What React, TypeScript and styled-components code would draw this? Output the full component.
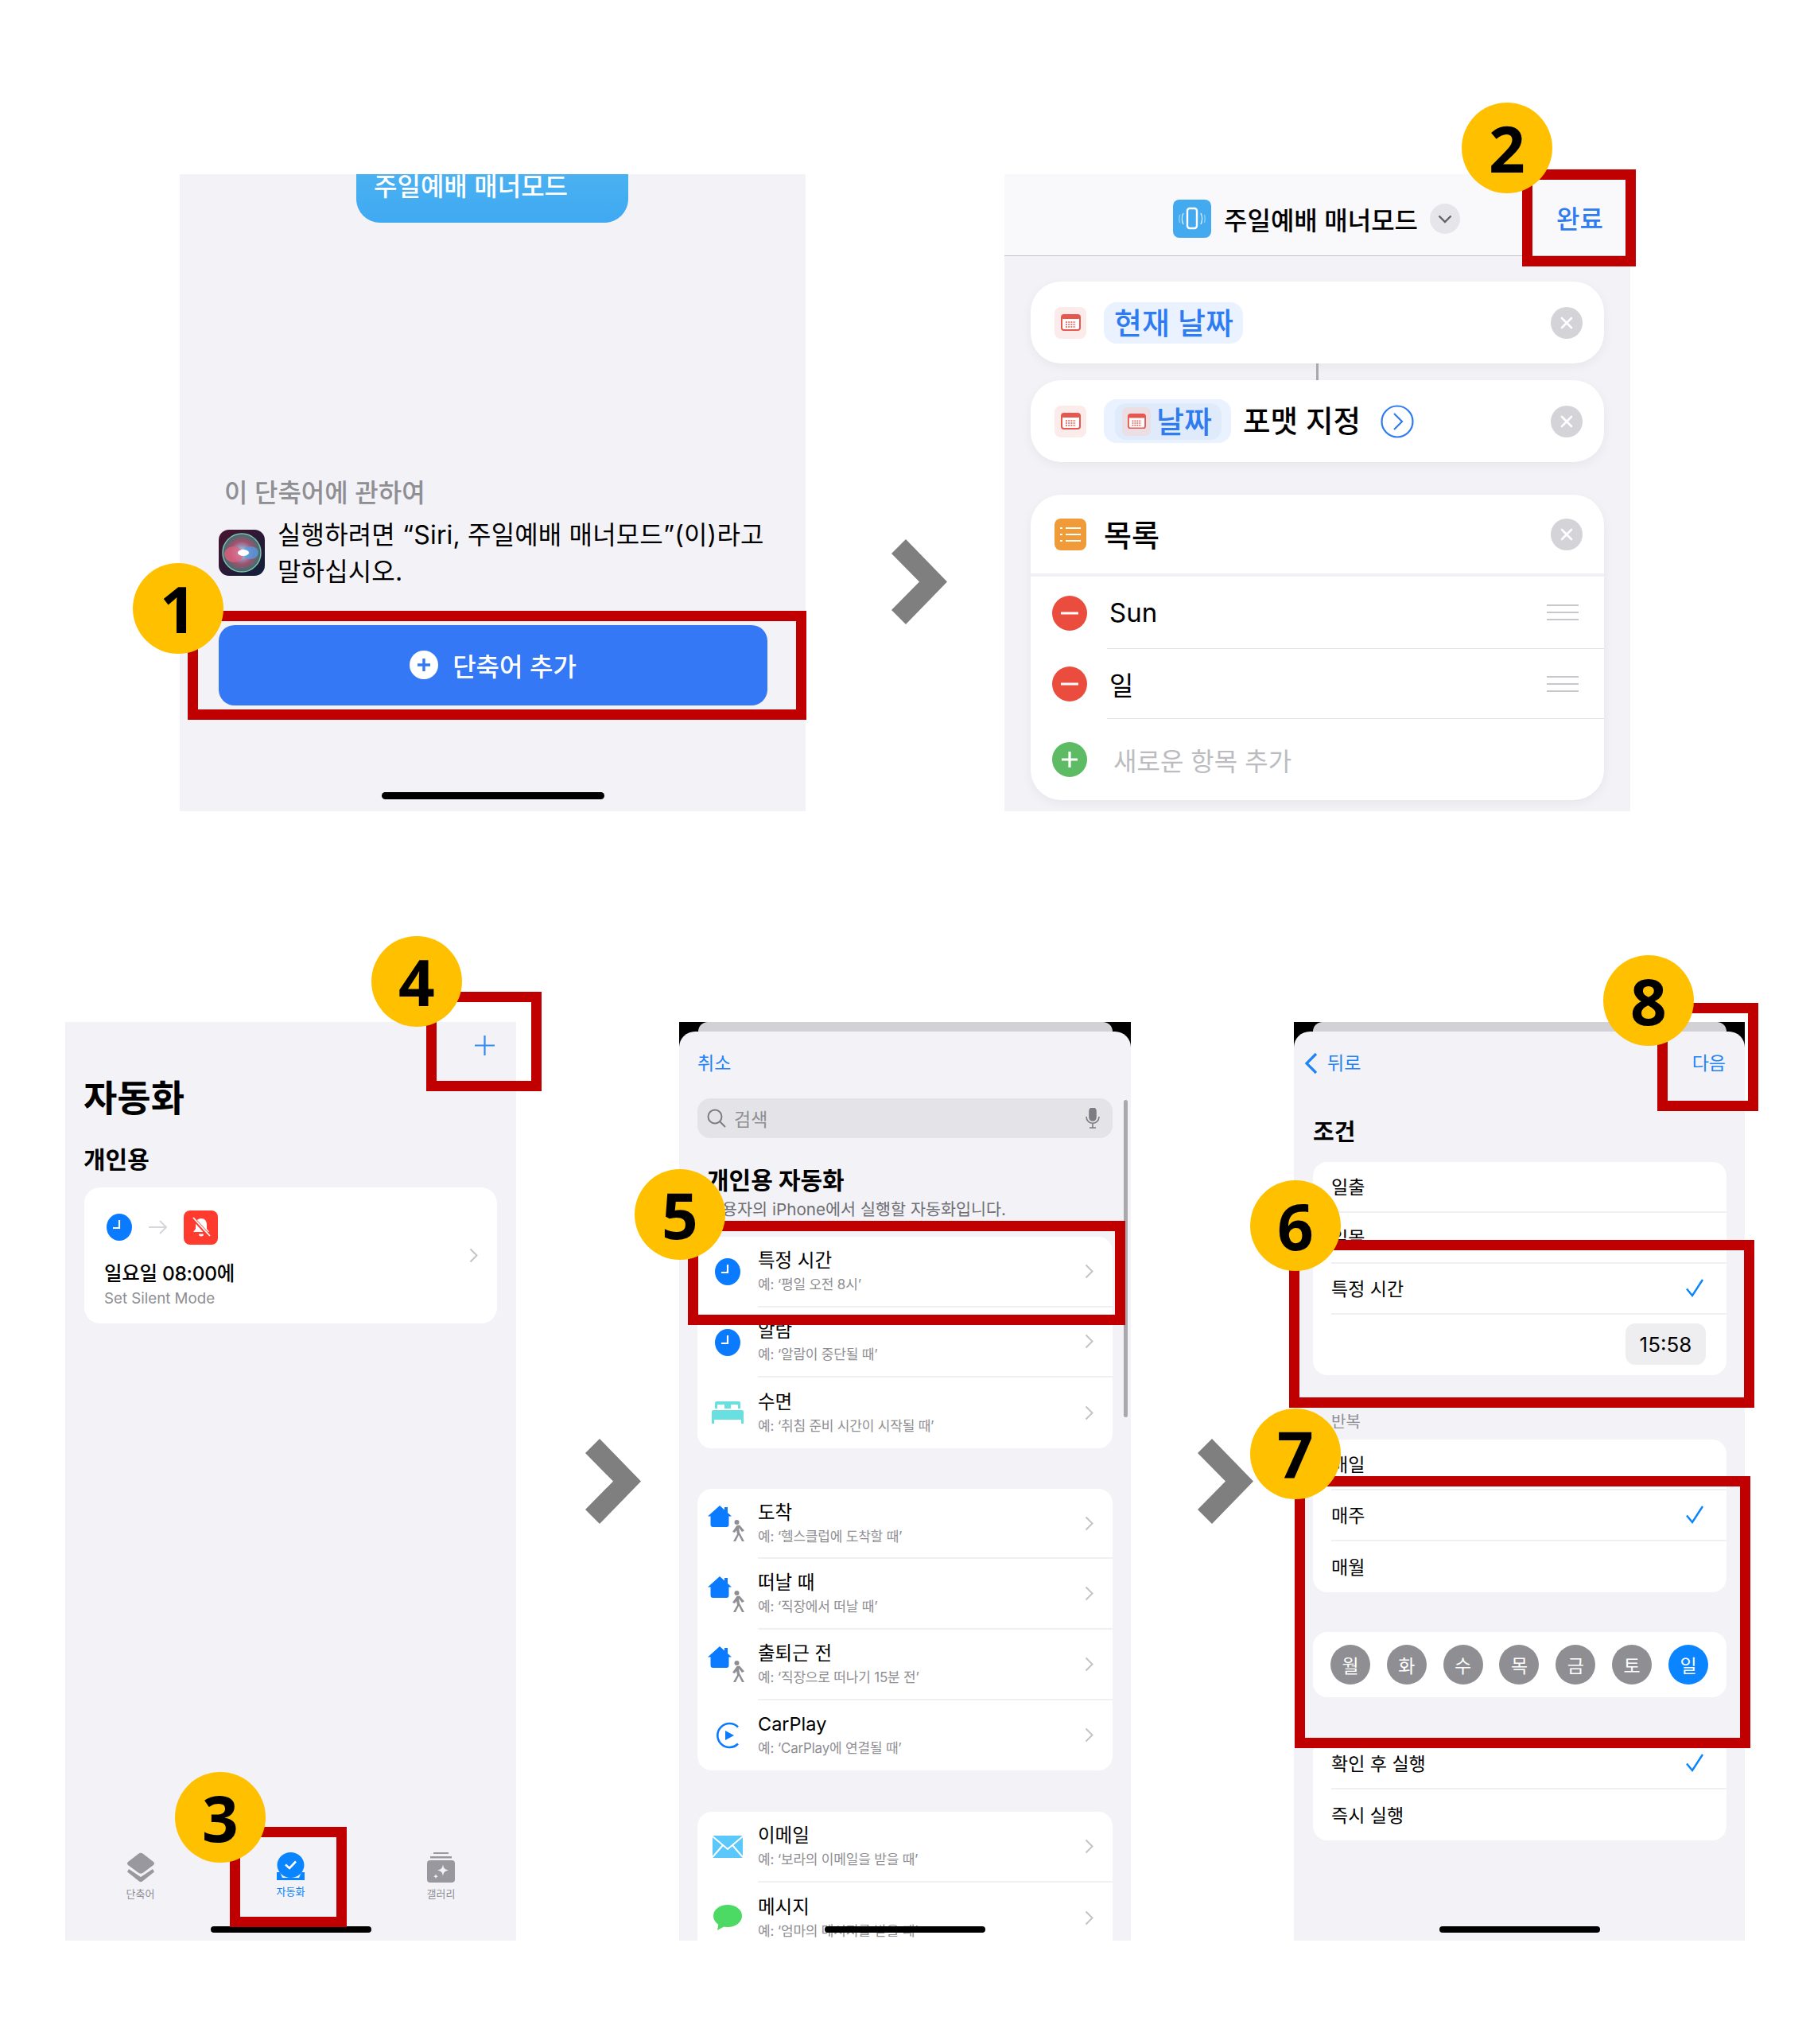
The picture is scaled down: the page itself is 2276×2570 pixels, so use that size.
import styled, { createGlobalStyle } from 'styled-components'

const GlobalStyle = createGlobalStyle`
  html, body {
    margin: 0;
    padding: 0;
    background: #fff;
  }
  * {
    box-sizing: border-box;
  }
  body {
    font-family: Inter, 'Noto Sans CJK KR', sans-serif;
    color: #000;
  }
`

// page layout
const Page = styled.div`
  width: 2276px;
  height: 2570px;
  padding-top: 219px;
  overflow: hidden;
`
const StepRow = styled.div<{ $left: number; $height: number; $mb?: number }>`
  display: flex;
  align-items: flex-start;
  padding-left: ${({ $left }) => $left}px;
  height: ${({ $height }) => $height}px;
  margin-bottom: ${({ $mb }) => $mb ?? 0}px;
`
const Phone = styled.div<{ $w: number; $h: number }>`
  position: relative;
  flex: none;
  width: ${({ $w }) => $w}px;
  height: ${({ $h }) => $h}px;
`
const Screen = styled.div<{ $dark?: boolean }>`
  position: relative;
  display: flex;
  flex-direction: column;
  width: 100%;
  height: 100%;
  overflow: hidden;
  background: ${({ $dark }) => ($dark ? '#000' : '#f2f2f7')};
`
const NextArrow = styled.svg<{ $ml: number; $mr: number; $mt: number }>`
  flex: none;
  width: 70px;
  height: 107px;
  margin: ${({ $mt }) => $mt}px ${({ $mr }) => $mr}px 0 ${({ $ml }) => $ml}px;
  fill: #7f7f7f;
`

// annotations on top of the screenshots
const RedBox = styled.div<{ $x: number; $y: number; $w: number; $h: number }>`
  position: absolute;
  left: ${({ $x }) => $x}px;
  top: ${({ $y }) => $y}px;
  width: ${({ $w }) => $w}px;
  height: ${({ $h }) => $h}px;
  border: 13px solid #c00000;
`
const Badge = styled.div<{ $x: number; $y: number }>`
  position: absolute;
  left: ${({ $x }) => $x}px;
  top: ${({ $y }) => $y}px;
  width: 114px;
  height: 114px;
  padding-bottom: 1px;
  border-radius: 50%;
  background: #ffc000;
  display: flex;
  align-items: center;
  justify-content: center;
  font-family: 'Noto Sans', sans-serif;
  font-size: 80px;
  font-weight: 700;
  line-height: 1;
  color: #000;
`
const HomeBar = styled.div<{ $w: number; $h: number; $bottom: number }>`
  position: absolute;
  left: 50%;
  bottom: ${({ $bottom }) => $bottom}px;
  width: ${({ $w }) => $w}px;
  height: ${({ $h }) => $h}px;
  margin-left: ${({ $w }) => -$w / 2}px;
  border-radius: 5px;
  background: #000;
`

// step 1
const ShortcutTile = styled.div`
  flex: none;
  width: 342px;
  height: 61px;
  margin-left: 222px;
  padding-left: 22px;
  border-radius: 0 0 30px 30px;
  background: linear-gradient(#4ab1f1, #3fa9f2);
  color: #fff;
  font-size: 32px;
  font-weight: 500;
  line-height: 38px;
  margin-bottom: 320px;
  span {
    display: block;
    margin-top: -3px;
  }
`
const AboutTitle = styled.div`
  margin-left: 56px;
  font-size: 32px;
  font-weight: 500;
  line-height: 40px;
  color: #8e8e93;
  margin-bottom: 10px;
`
const SiriRow = styled.div`
  display: flex;
  align-items: flex-start;
  gap: 16px;
  margin-left: 49px;
  margin-bottom: 44px;
  svg {
    flex: none;
    margin-top: 16px;
  }
`
const SiriText = styled.div`
  width: 660px;
  font-size: 32px;
  line-height: 46px;
  letter-spacing: 0.15px;
`
const AddButton = styled.div`
  display: flex;
  align-items: center;
  justify-content: center;
  gap: 18px;
  width: 690px;
  height: 101px;
  margin-left: 49px;
  padding-bottom: 2px;
  border-radius: 20px;
  background: #3478f6;
  color: #fff;
  font-size: 32px;
  font-weight: 500;
`

// step 2
const EditorHeader = styled.div`
  flex: none;
  display: flex;
  align-items: center;
  height: 103px;
  padding: 10px 34px 0 212px;
  background: #f9f9fb;
  border-bottom: 1px solid #c6c6c8;
`
const EditorTitle = styled.div`
  margin-left: 16px;
  font-size: 32px;
  font-weight: 500;
  white-space: nowrap;
`
const TitleChevron = styled.div`
  display: flex;
  align-items: center;
  justify-content: center;
  width: 38px;
  height: 38px;
  margin-left: 15px;
  border-radius: 50%;
  background: #e5e5ea;
`
const DoneLabel = styled.div`
  margin-left: auto;
  margin-top: -5px;
  font-size: 32px;
  font-weight: 500;
  color: #2f7bf0;
`
const EditorBody = styled.div`
  display: flex;
  flex-direction: column;
  padding: 32px 33px 0;
`
const ActionCard = styled.div`
  flex: none;
  display: flex;
  align-items: center;
  height: 103px;
  padding: 0 27px 0 30px;
  border-radius: 38px;
  background: #fff;
  box-shadow: 0 4px 14px rgba(0, 0, 0, 0.05);
`
const Connector = styled.div`
  flex: none;
  align-self: center;
  width: 3px;
  height: 21px;
  background: #a8a8ad;
`
const ActionIcon = styled.div<{ $bg: string }>`
  flex: none;
  display: flex;
  align-items: center;
  justify-content: center;
  width: 40px;
  height: 40px;
  border-radius: 8px;
  background: ${({ $bg }) => $bg};
`
const VarChip = styled.div`
  display: flex;
  align-items: center;
  margin-left: 22px;
  padding: 0 12px 5px 13px;
  height: 52px;
  border-radius: 16px;
  background: #e9f2fe;
  color: #2f7bf0;
  font-size: 38px;
  font-weight: 500;
  white-space: nowrap;
`
const OuterChip = styled(VarChip)`
  height: 55px;
  padding: 0 12px 0 14px;
`
const InnerChip = styled.div`
  display: flex;
  align-items: center;
  gap: 7px;
  height: 46px;
  padding: 0 12px 5px 9px;
  border-radius: 14px;
  background: #dfeafb;
`
const SmallCal = styled.div`
  display: flex;
  align-items: center;
  justify-content: center;
  width: 36px;
  height: 36px;
  margin-bottom: -5px;
  border-radius: 7px;
  background: #ecdfe4;
`
const ActionText = styled.div`
  margin-left: 15px;
  padding-bottom: 6px;
  font-size: 37.5px;
  font-weight: 500;
  white-space: nowrap;
`
const CloseDot = styled.div`
  flex: none;
  display: flex;
  align-items: center;
  justify-content: center;
  width: 40px;
  height: 40px;
  margin-left: auto;
  border-radius: 50%;
  background: #d4d4d8;
`
const ListCard = styled.div`
  flex: none;
  height: 384px;
  margin-top: 41px;
  border-radius: 38px;
  background: #fff;
  box-shadow: 0 4px 14px rgba(0, 0, 0, 0.05);
  overflow: hidden;
`
const ListHead = styled.div`
  display: flex;
  align-items: center;
  height: 103px;
  padding: 0 27px 0 30px;
  border-bottom: 4px solid #f0f0f5;
`
const ListTitle = styled.div`
  margin-left: 22px;
  padding-bottom: 2px;
  font-size: 38px;
  font-weight: 500;
`
const ListItem = styled.div<{ $h: number }>`
  display: flex;
  align-items: stretch;
  height: ${({ $h }) => $h}px;
  padding-left: 27px;
`
const RoundSign = styled.div<{ $bg: string }>`
  flex: none;
  align-self: center;
  display: flex;
  align-items: center;
  justify-content: center;
  width: 44px;
  height: 44px;
  border-radius: 50%;
  background: ${({ $bg }) => $bg};
`
const ListItemBody = styled.div<{ $line?: boolean; $muted?: boolean }>`
  flex: 1;
  display: flex;
  align-items: center;
  justify-content: space-between;
  margin-left: 25px;
  padding: 0 32px 0 ${({ $muted }) => ($muted ? 8 : 3)}px;
  border-bottom: ${({ $line }) => ($line ? '1px solid #e2e2e6' : 'none')};
  font-size: ${({ $muted }) => ($muted ? 32 : 33)}px;
  color: ${({ $muted }) => ($muted ? '#bcbcc0' : '#000')};
`
const DragLines = styled.div`
  width: 40px;
  height: 20px;
  border-top: 2px solid #c8c8cc;
  border-bottom: 2px solid #c8c8cc;
  position: relative;
  &::after {
    content: '';
    position: absolute;
    left: 0;
    right: 0;
    top: 7px;
    height: 2px;
    background: #c8c8cc;
  }
`

// step 3, 4
const TopPlusRow = styled.div`
  flex: none;
  display: flex;
  justify-content: flex-end;
  height: 66px;
  padding: 17px 27px 0 0;
`
const BigTitle = styled.div`
  flex: none;
  margin: 1px 0 30px 23px;
  font-size: 46px;
  line-height: 56px;
  font-weight: 700;
`
const SectionTitle = styled.div`
  flex: none;
  margin-left: 23px;
  font-size: 30px;
  line-height: 40px;
  font-weight: 700;
`
const AutomationCard = styled.div`
  flex: none;
  display: flex;
  align-items: center;
  justify-content: space-between;
  height: 171px;
  margin: 15px 24px 0;
  padding: 0 24px 0 25px;
  border-radius: 20px;
  background: #fff;
`
const AutomationText = styled.div`
  padding-top: 10px;
`
const FlowIcons = styled.div`
  display: flex;
  align-items: center;
  padding-left: 3px;
  gap: 21px;
  margin-bottom: 19px;
`
const AutomationTitle = styled.div`
  font-size: 24.5px;
  line-height: 34px;
  font-weight: 500;
  letter-spacing: -0.3px;
`
const AutomationSub = styled.div`
  margin-top: 2px;
  font-size: 18.7px;
  line-height: 26px;
  color: #8e8e93;
`
const BellTile = styled.div`
  display: flex;
  align-items: center;
  justify-content: center;
  width: 43px;
  height: 43px;
  border-radius: 8px;
  background: #ff3b30;
`
const TabBar = styled.div`
  display: grid;
  grid-template-columns: repeat(3, 1fr);
  margin-top: auto;
  padding-bottom: 50px;
`
const Tab = styled.div<{ $active?: boolean }>`
  display: flex;
  flex-direction: column;
  align-items: center;
  gap: 5px;
  font-size: 13px;
  line-height: 18px;
  color: ${({ $active }) => ($active ? '#0a84ff' : '#8e8e93')};
`

// step 5, 6 sheets
const BackSheet = styled.div`
  flex: none;
  height: 12px;
  margin: 0 23px 0 24px;
  border-radius: 14px 14px 0 0;
  background: #d1d1d6;
`
const Sheet = styled.div`
  flex: 1;
  display: flex;
  flex-direction: column;
  border-radius: 20px 20px 0 0;
  background: #f2f2f7;
  padding-top: 25px;
  min-height: 0;
`
const LinkText = styled.div`
  font-size: 23px;
  line-height: 30px;
  color: #1f84f5;
`
const CancelLink = styled(LinkText)`
  margin-left: 23px;
`
const SearchBar = styled.div`
  flex: none;
  display: flex;
  align-items: center;
  height: 50px;
  margin: 29px 23px 0;
  padding: 0 16px 0 12px;
  border-radius: 16px;
  background: #e3e3e8;
  color: #8e8e93;
  font-size: 23px;
`
const SearchText = styled.div`
  margin-left: 10px;
  margin-top: -1px;
  flex: 1;
`
const SheetTitle = styled.div`
  flex: none;
  margin: 33px 0 3px 35px;
  font-size: 30px;
  line-height: 40px;
  font-weight: 700;
`
const SheetSub = styled.div`
  flex: none;
  margin-left: 35px;
  font-size: 20.7px;
  line-height: 28px;
  color: #6e6e73;
  white-space: nowrap;
`
const TriggerGroup = styled.div<{ $mt: number }>`
  flex: none;
  margin: ${({ $mt }) => $mt}px 23px 0;
  border-radius: 18px;
  background: #fff;
  overflow: hidden;
`
const TriggerRow = styled.div`
  display: flex;
  height: 88.6px;
`
const TriggerIcon = styled.div`
  flex: none;
  position: relative;
  display: flex;
  align-items: center;
  justify-content: center;
  width: 76px;
`
const TriggerBody = styled.div<{ $line: boolean }>`
  flex: 1;
  display: flex;
  align-items: center;
  justify-content: space-between;
  padding-right: 24px;
  border-bottom: ${({ $line }) => ($line ? '2px solid #f0f0f4' : 'none')};
`
const TriggerTitle = styled.div`
  font-size: 23.5px;
  line-height: 30px;
`
const TriggerSub = styled.div`
  margin-top: 3px;
  font-size: 17px;
  line-height: 24px;
  color: #8e8e93;
  letter-spacing: -0.2px;
`
const ScrollThumb = styled.div`
  position: absolute;
  top: 98px;
  right: 4px;
  width: 5px;
  height: 399px;
  border-radius: 3px;
  background: #a8a8ad;
`
const NavRow = styled.div`
  flex: none;
  display: flex;
  align-items: center;
  justify-content: space-between;
  padding: 0 24px 0 13px;
`
const BackLink = styled.div`
  display: flex;
  align-items: center;
  gap: 12px;
`
const OptionTitle = styled.div`
  flex: none;
  margin: 53px 0 18px 24px;
  font-size: 29px;
  line-height: 38px;
  font-weight: 700;
`
const OptionGroup = styled.div`
  flex: none;
  margin: 0 23px 0 24px;
  border-radius: 18px;
  background: #fff;
  overflow: hidden;
`
const OptionRow = styled.div`
  display: flex;
  height: 64px;
  padding-left: 23px;
`
const OptionBody = styled.div<{ $line: boolean }>`
  flex: 1;
  display: flex;
  align-items: center;
  justify-content: space-between;
  padding: 0 28px 3px 0;
  font-size: 23px;
  border-bottom: ${({ $line }) => ($line ? '2px solid #f0f0f4' : 'none')};
`
const TimeRow = styled.div`
  display: flex;
  justify-content: flex-end;
  height: 76px;
  padding: 11px 26px 0 0;
`
const TimeChip = styled.div`
  display: flex;
  align-items: center;
  justify-content: center;
  width: 101px;
  height: 52px;
  border-radius: 12px;
  background: #eeeef0;
  font-size: 26px;
`
const RepeatLabel = styled.div`
  flex: none;
  margin: 46px 0 9px 47px;
  font-size: 20px;
  line-height: 26px;
  color: #8e8e93;
`
const DaysGroup = styled(OptionGroup)`
  display: flex;
  align-items: center;
  justify-content: space-between;
  height: 82px;
  margin-top: 50px;
  margin-bottom: 52px;
  padding: 0 23px 0 22px;
`
const DayDot = styled.div<{ $on?: boolean }>`
  display: flex;
  align-items: center;
  justify-content: center;
  width: 50px;
  height: 50px;
  border-radius: 50%;
  background: ${({ $on }) => ($on ? '#0a84ff' : '#8e8e93')};
  color: #fff;
  font-size: 23px;
`

// drawings
const ChevronRight = () => (
  <svg width="11" height="19" viewBox="0 0 11 19" fill="none" stroke="#c4c4c8" strokeWidth="2">
    <path d="M1.5 1.5 9.5 9.5 1.5 17.5" />
  </svg>
)

const ClockIcon = () => (
  <svg width="32" height="34" viewBox="0 0 32 34">
    <ellipse cx="16" cy="17" rx="16" ry="17" fill="#0a7bff" />
    <path d="M16 8v10H8" fill="none" stroke="#fff" strokeWidth="2.2" />
  </svg>
)

const CheckMark = () => (
  <svg width="24" height="24" viewBox="0 0 24 24" fill="none" stroke="#0a84ff" strokeWidth="2.4">
    <path d="M2 13.5 9 22 22 2" />
  </svg>
)

const CalendarGlyph = ({ size }: { size: number }) => (
  <svg width={size} height={size * 0.84} viewBox="0 0 25 21">
    <rect x="1" y="1" width="23" height="19" rx="3" fill="#fff" stroke="#e5584f" strokeWidth="2" />
    <rect x="1" y="1" width="23" height="5" rx="2" fill="#e5584f" />
    <path d="M6 10h13M6 13h13M6 16h13" stroke="#e5584f" strokeWidth="1.6" strokeDasharray="2 1.2" />
  </svg>
)

const CloseGlyph = () => (
  <svg width="16" height="16" viewBox="0 0 16 16" stroke="#fff" strokeWidth="2.6" strokeLinecap="round">
    <path d="M2 2l12 12M14 2 2 14" />
  </svg>
)

const SiriIcon = () => (
  <svg width="58" height="58" viewBox="0 0 58 58">
    <defs>
      <radialGradient id="siriGlow" cx="50%" cy="50%" r="50%">
        <stop offset="0" stopColor="#fff" />
        <stop offset="0.25" stopColor="#a9c4ec" />
        <stop offset="0.6" stopColor="#b75a78" />
        <stop offset="1" stopColor="#3c7f7a" />
      </radialGradient>
      <linearGradient id="siriBg" x1="0" y1="0" x2="1" y2="1">
        <stop offset="0" stopColor="#4a1430" />
        <stop offset="1" stopColor="#0e1f3b" />
      </linearGradient>
    </defs>
    <rect width="58" height="58" rx="13" fill="url(#siriBg)" />
    <circle cx="29" cy="29" r="24" fill="url(#siriGlow)" opacity="0.85" />
    <circle cx="29" cy="29" r="24" fill="none" stroke="#7bc0a8" strokeWidth="1.5" />
    <ellipse cx="19" cy="31" rx="12" ry="10" fill="#e0607e" opacity="0.75" />
    <ellipse cx="40" cy="29" rx="10" ry="8" fill="#4fa0e8" opacity="0.75" />
    <ellipse cx="31" cy="29" rx="7" ry="4" fill="#fff" />
  </svg>
)

const PlusDisc = () => (
  <svg width="36" height="36" viewBox="0 0 36 36">
    <circle cx="18" cy="18" r="18" fill="#fff" />
    <path d="M18 10v16M10 18h16" stroke="#3478f6" strokeWidth="3.4" />
  </svg>
)

const PhoneWaveIcon = () => (
  <svg width="48" height="48" viewBox="0 0 48 48" fill="none">
    <rect width="48" height="48" rx="8" fill="#43aaf0" />
    <rect x="18" y="11" width="12" height="25" rx="3" stroke="#fff" strokeWidth="2.4" />
    <path d="M13 17c-2 4-2 10 0 14M35 17c2 4 2 10 0 14" stroke="#cfeaff" strokeWidth="1.6" />
    <path d="M8.500 19c-1 3-1 7 0 10M39.500 19c1 3 1 7 0 10" stroke="#8ed0fa" strokeWidth="1.4" />
  </svg>
)

const ListGlyph = () => (
  <svg width="26" height="20" viewBox="0 0 26 20" stroke="#fff" strokeWidth="2.2">
    <path d="M7 2h19M7 10h19M7 18h19M0 2h3M0 10h3M0 18h3" />
  </svg>
)

const BellOffGlyph = () => (
  <svg width="28" height="28" viewBox="0 0 28 28">
    <path d="M14 3c-5 0-7 4-7 8v5l-3 4h20l-3-4v-5c0-4-2-8-7-8z" fill="#fff" />
    <path d="M11 22.500h6a3 3 0 0 1-6 0z" fill="#fff" />
    <path d="M3 2l22 24" stroke="#ff3b30" strokeWidth="4.500" />
    <path d="M4 2l21 23" stroke="#fff" strokeWidth="1.8" />
  </svg>
)

const LayersIcon = () => (
  <svg width="36" height="38" viewBox="0 0 36 38" fill="#98989e">
    <path d="M3 21 18 31 33 21 35 24.500 20 36.500Q18 38 16 36.500L1 24.500z" />
    <path d="M15.500 1.500Q18 0 20.500 1.500L34 12q2 2 0 4L20.500 26q-2.500 1.500-5 0L2 16q-2-2 0-4z" />
  </svg>
)

const AutomationIcon = () => (
  <svg width="35" height="35" viewBox="0 0 35 35">
    <path d="M0 25h4l3 7h21l3-7h4v10H0z" fill="#0a84ff" />
    <ellipse cx="17.500" cy="16" rx="17" ry="16" fill="#0a84ff" />
    <path d="M11 15.500l5 4.500 8-8.500" fill="none" stroke="#fff" strokeWidth="2.6" />
  </svg>
)

const GalleryIcon = () => (
  <svg width="35" height="38" viewBox="0 0 35 38" fill="#98989e">
    <rect x="8" y="0" width="19" height="2" />
    <rect x="4" y="5" width="27" height="2.500" />
    <rect y="10" width="35" height="28" rx="4" />
    <path d="M20 15c.8 5 2 6.500 7 7.500-5 1-6.200 2.500-7 7.500-.8-5-2-6.500-7-7.500 5-1 6.200-2.500 7-7.500z" fill="#f2f2f7" />
    <path d="M11 27c.3 2 1 2.800 3 3.200-2 .4-2.700 1.200-3 3.200-.3-2-1-2.800-3-3.200 2-.4 2.700-1.200 3-3.200z" fill="#f2f2f7" />
  </svg>
)

const SearchGlyph = () => (
  <svg width="24" height="24" viewBox="0 0 24 24" fill="none" stroke="#7c7c82" strokeWidth="2">
    <circle cx="10" cy="10" r="8.500" />
    <path d="M16 16l7 7" />
  </svg>
)

const MicGlyph = () => (
  <svg width="18" height="26" viewBox="0 0 18 26" fill="none" stroke="#7c7c82" strokeWidth="1.6">
    <rect x="5" y="0" width="8" height="16" rx="4" fill="#7c7c82" />
    <path d="M1 11c0 11 16 11 16 0M9 19v6M5 25h8" />
  </svg>
)

const HomeWalkerIcon = () => (
  <svg width="50" height="46" viewBox="0 0 50 46">
    <path d="M15 0 30 13.500h-3.500V24q0 3-3 3H6.500q-3 0-3-3V13.500H0z" fill="#0a7bff" />
    <rect x="21" y="2" width="4" height="7" fill="#0a7bff" />
    <circle cx="36.500" cy="21" r="3" fill="#8e8e93" />
    <path d="M36.500 25 31 33l3 1 2-3 1 5-5 9h3l4-8 4 8h3l-6-11-1-6 4 5 3-1.500-6-7z" fill="#8e8e93" />
  </svg>
)

const BedIcon = () => (
  <svg width="40" height="28" viewBox="0 0 40 28" fill="#68e0e0">
    <path d="M4 2q0-2 2-2h28q2 0 2 2v7h-3V5q0-1-1-1h-7q-1 0-1 1v4h-8V5q0-1-1-1H8q-1 0-1 1v4H4z" />
    <path d="M2 11h36q2 0 2 2v10H0V13q0-2 2-2z" />
    <rect x="0" y="23" width="3" height="5" />
    <rect x="37" y="23" width="3" height="5" />
  </svg>
)

const CarPlayIcon = () => (
  <svg width="30" height="34" viewBox="0 0 30 34" fill="none">
    <path d="M28 6.500A15 15 0 1 0 28 27.500" stroke="#0a7bff" strokeWidth="2.6" />
    <path d="M12 11l11 6-11 6z" fill="#0a7bff" />
  </svg>
)

const MailIcon = () => (
  <svg width="38" height="28" viewBox="0 0 38 28">
    <rect width="38" height="28" rx="1.500" fill="#5ac8fa" />
    <path d="M0 1 19 17 38 1M0 27 13 12M38 27 25 12" fill="none" stroke="#fff" strokeWidth="2" />
  </svg>
)

const MessageIcon = () => (
  <svg width="36" height="32" viewBox="0 0 36 32" fill="#4cd964">
    <ellipse cx="18" cy="14" rx="18" ry="14" />
    <path d="M7 21l-2 11 11-6z" />
  </svg>
)

type Trigger = { title: string; sub: string; icon: React.ReactNode }

const timeTriggers: Trigger[] = [
  { title: '특정 시간', sub: '예: ‘평일 오전 8시’', icon: <ClockIcon /> },
  { title: '알람', sub: '예: ‘알람이 중단될 때’', icon: <ClockIcon /> },
  { title: '수면', sub: '예: ‘취침 준비 시간이 시작될 때’', icon: <BedIcon /> },
]

const placeTriggers: Trigger[] = [
  { title: '도착', sub: '예: ‘헬스클럽에 도착할 때’', icon: <HomeWalkerIcon /> },
  { title: '떠날 때', sub: '예: ‘직장에서 떠날 때’', icon: <HomeWalkerIcon /> },
  { title: '출퇴근 전', sub: '예: ‘직장으로 떠나기 15분 전’', icon: <HomeWalkerIcon /> },
  { title: 'CarPlay', sub: '예: ‘CarPlay에 연결될 때’', icon: <CarPlayIcon /> },
]

const messageTriggers: Trigger[] = [
  { title: '이메일', sub: '예: ‘보라의 이메일을 받을 때’', icon: <MailIcon /> },
  { title: '메시지', sub: '예: ‘엄마의 메시지를 받을 때’', icon: <MessageIcon /> },
]

const days = ['월', '화', '수', '목', '금', '토', '일']

const TriggerList = ({ items, mt }: { items: Trigger[]; mt: number }) => (
  <TriggerGroup $mt={mt}>
    {items.map((item, index) => (
      <TriggerRow key={item.title}>
        <TriggerIcon>{item.icon}</TriggerIcon>
        <TriggerBody $line={index < items.length - 1}>
          <div>
            <TriggerTitle>{item.title}</TriggerTitle>
            <TriggerSub>{item.sub}</TriggerSub>
          </div>
          <ChevronRight />
        </TriggerBody>
      </TriggerRow>
    ))}
  </TriggerGroup>
)

const Option = ({ label, line, checked }: { label: string; line: boolean; checked?: boolean }) => (
  <OptionRow>
    <OptionBody $line={line}>
      {label}
      {checked && <CheckMark />}
    </OptionBody>
  </OptionRow>
)

const Arrow = ({ ml, mr, mt }: { ml: number; mr: number; mt: number }) => (
  <NextArrow $ml={ml} $mr={mr} $mt={mt} viewBox="0 0 70 107">
    <path d="M0 18 18 0 70 53.500 18 107 0 89 35 53.500z" />
  </NextArrow>
)

const App = () => {
  return (
    <Page>
      <GlobalStyle />

      <StepRow $left={226} $height={801} $mb={265}>
        <Phone $w={787} $h={801}>
          <Screen>
            <ShortcutTile>
              <span>주일예배 매너모드</span>
            </ShortcutTile>
            <AboutTitle>이 단축어에 관하여</AboutTitle>
            <SiriRow>
              <SiriIcon />
              <SiriText>
                실행하려면 “Siri, 주일예배 매너모드”(이)라고
                <br />
                말하십시오.
              </SiriText>
            </SiriRow>
            <AddButton>
              <PlusDisc />
              단축어 추가
            </AddButton>
            <HomeBar $w={280} $h={9} $bottom={15} />
          </Screen>
          <RedBox $x={10} $y={549} $w={778} $h={137} />
          <Badge $x={-59} $y={489}>1</Badge>
        </Phone>

        <Arrow ml={108} mr={72} mt={459} />

        <Phone $w={787} $h={801}>
          <Screen>
            <EditorHeader>
              <PhoneWaveIcon />
              <EditorTitle>주일예배 매너모드</EditorTitle>
              <TitleChevron>
                <svg width="18" height="11" viewBox="0 0 18 11" fill="none" stroke="#636366" strokeWidth="2.4">
                  <path d="M1.500 1.500 9 9l7.500-7.500" />
                </svg>
              </TitleChevron>
              <DoneLabel>완료</DoneLabel>
            </EditorHeader>
            <EditorBody>
              <ActionCard>
                <ActionIcon $bg="#fbeceb">
                  <CalendarGlyph size={25} />
                </ActionIcon>
                <VarChip>현재 날짜</VarChip>
                <CloseDot>
                  <CloseGlyph />
                </CloseDot>
              </ActionCard>
              <Connector />
              <ActionCard>
                <ActionIcon $bg="#fbeceb">
                  <CalendarGlyph size={25} />
                </ActionIcon>
                <OuterChip>
                  <InnerChip>
                    <SmallCal>
                      <CalendarGlyph size={23} />
                    </SmallCal>
                    날짜
                  </InnerChip>
                </OuterChip>
                <ActionText>포맷 지정</ActionText>
                <svg width="42" height="42" viewBox="0 0 42 42" fill="none" stroke="#2f7bf0" strokeWidth="2.2" style={{ marginLeft: 25 }}>
                  <circle cx="21" cy="21" r="19.500" />
                  <path d="M17 11l10 10-10 10" />
                </svg>
                <CloseDot>
                  <CloseGlyph />
                </CloseDot>
              </ActionCard>
              <ListCard>
                <ListHead>
                  <ActionIcon $bg="#f19a38">
                    <ListGlyph />
                  </ActionIcon>
                  <ListTitle>목록</ListTitle>
                  <CloseDot>
                    <CloseGlyph />
                  </CloseDot>
                </ListHead>
                <ListItem $h={91}>
                  <RoundSign $bg="#ea4d3d">
                    <svg width="22" height="4"><rect width="22" height="3" y="0.500" fill="#fff" /></svg>
                  </RoundSign>
                  <ListItemBody $line>
                    Sun
                    <DragLines />
                  </ListItemBody>
                </ListItem>
                <ListItem $h={88}>
                  <RoundSign $bg="#ea4d3d">
                    <svg width="22" height="4"><rect width="22" height="3" y="0.500" fill="#fff" /></svg>
                  </RoundSign>
                  <ListItemBody $line>
                    일
                    <DragLines />
                  </ListItemBody>
                </ListItem>
                <ListItem $h={102}>
                  <RoundSign $bg="#5dbb63">
                    <svg width="22" height="22" viewBox="0 0 22 22" stroke="#fff" strokeWidth="3.200">
                      <path d="M11 1v20M1 11h20" />
                    </svg>
                  </RoundSign>
                  <ListItemBody $muted>새로운 항목 추가</ListItemBody>
                </ListItem>
              </ListCard>
            </EditorBody>
          </Screen>
          <RedBox $x={651} $y={-6} $w={143} $h={122} />
          <Badge $x={575} $y={-90}>2</Badge>
        </Phone>
      </StepRow>

      <StepRow $left={82} $height={1155}>
        <Phone $w={567} $h={1155}>
          <Screen>
            <TopPlusRow>
              <svg width="25" height="25" viewBox="0 0 25 25" stroke="#2f8bf5" strokeWidth="2.200">
                <path d="M12.500 0v25M0 12.500h25" />
              </svg>
            </TopPlusRow>
            <BigTitle>자동화</BigTitle>
            <SectionTitle>개인용</SectionTitle>
            <AutomationCard>
              <AutomationText>
                <FlowIcons>
                  <ClockIcon />
                  <svg width="23" height="18" viewBox="0 0 23 18" fill="none" stroke="#d6d6da" strokeWidth="2">
                    <path d="M0 9h22M14 1l8 8-8 8" />
                  </svg>
                  <BellTile>
                    <BellOffGlyph />
                  </BellTile>
                </FlowIcons>
                <AutomationTitle>일요일 08:00에</AutomationTitle>
                <AutomationSub>Set Silent Mode</AutomationSub>
              </AutomationText>
              <ChevronRight />
            </AutomationCard>
            <TabBar>
              <Tab>
                <LayersIcon />
                단축어
              </Tab>
              <Tab $active>
                <AutomationIcon />
                자동화
              </Tab>
              <Tab>
                <GalleryIcon />
                갤러리
              </Tab>
            </TabBar>
            <HomeBar $w={202} $h={8} $bottom={10} />
          </Screen>
          <RedBox $x={454} $y={-38} $w={145} $h={125} />
          <Badge $x={385} $y={-108}>4</Badge>
          <RedBox $x={207} $y={1012} $w={147} $h={126} />
          <Badge $x={138} $y={943}>3</Badge>
        </Phone>

        <Arrow ml={87} mr={48} mt={524} />

        <Phone $w={568} $h={1155}>
          <Screen $dark>
            <BackSheet />
            <Sheet>
              <CancelLink>취소</CancelLink>
              <SearchBar>
                <SearchGlyph />
                <SearchText>검색</SearchText>
                <MicGlyph />
              </SearchBar>
              <SheetTitle>개인용 자동화</SheetTitle>
              <SheetSub>사용자의 iPhone에서 실행할 자동화입니다.</SheetSub>
              <TriggerList items={timeTriggers} mt={20} />
              <TriggerList items={placeTriggers} mt={51} />
              <TriggerList items={messageTriggers} mt={52} />
            </Sheet>
            <ScrollThumb />
            <HomeBar $w={202} $h={8} $bottom={10} />
          </Screen>
          <RedBox $x={11} $y={250} $w={550} $h={131} />
          <Badge $x={-56} $y={185}>5</Badge>
        </Phone>

        <Arrow ml={84} mr={51} mt={524} />

        <Phone $w={567} $h={1155}>
          <Screen $dark>
            <BackSheet />
            <Sheet>
              <NavRow>
                <BackLink>
                  <svg width="17" height="28" viewBox="0 0 17 28" fill="none" stroke="#1f84f5" strokeWidth="3.200">
                    <path d="M15 2 3 14l12 12" />
                  </svg>
                  <LinkText>뒤로</LinkText>
                </BackLink>
                <LinkText>다음</LinkText>
              </NavRow>
              <OptionTitle>조건</OptionTitle>
              <OptionGroup>
                <Option label="일출" line />
                <Option label="일몰" line />
                <Option label="특정 시간" line checked />
                <TimeRow>
                  <TimeChip>15:58</TimeChip>
                </TimeRow>
              </OptionGroup>
              <RepeatLabel>반복</RepeatLabel>
              <OptionGroup>
                <Option label="매일" line />
                <Option label="매주" line checked />
                <Option label="매월" line={false} />
              </OptionGroup>
              <DaysGroup>
                {days.map((day, index) => (
                  <DayDot key={day} $on={index === days.length - 1}>
                    {day}
                  </DayDot>
                ))}
              </DaysGroup>
              <OptionGroup>
                <Option label="확인 후 실행" line checked />
                <Option label="즉시 실행" line={false} />
              </OptionGroup>
            </Sheet>
            <HomeBar $w={202} $h={8} $bottom={10} />
          </Screen>
          <RedBox $x={457} $y={-24} $w={127} $h={136} />
          <Badge $x={389} $y={-84}>8</Badge>
          <RedBox $x={-6} $y={274} $w={585} $h={211} />
          <Badge $x={-55} $y={199}>6</Badge>
          <RedBox $x={1} $y={571} $w={573} $h={342} />
          <Badge $x={-55} $y={486}>7</Badge>
        </Phone>
      </StepRow>
    </Page>
  )
}

export default App
